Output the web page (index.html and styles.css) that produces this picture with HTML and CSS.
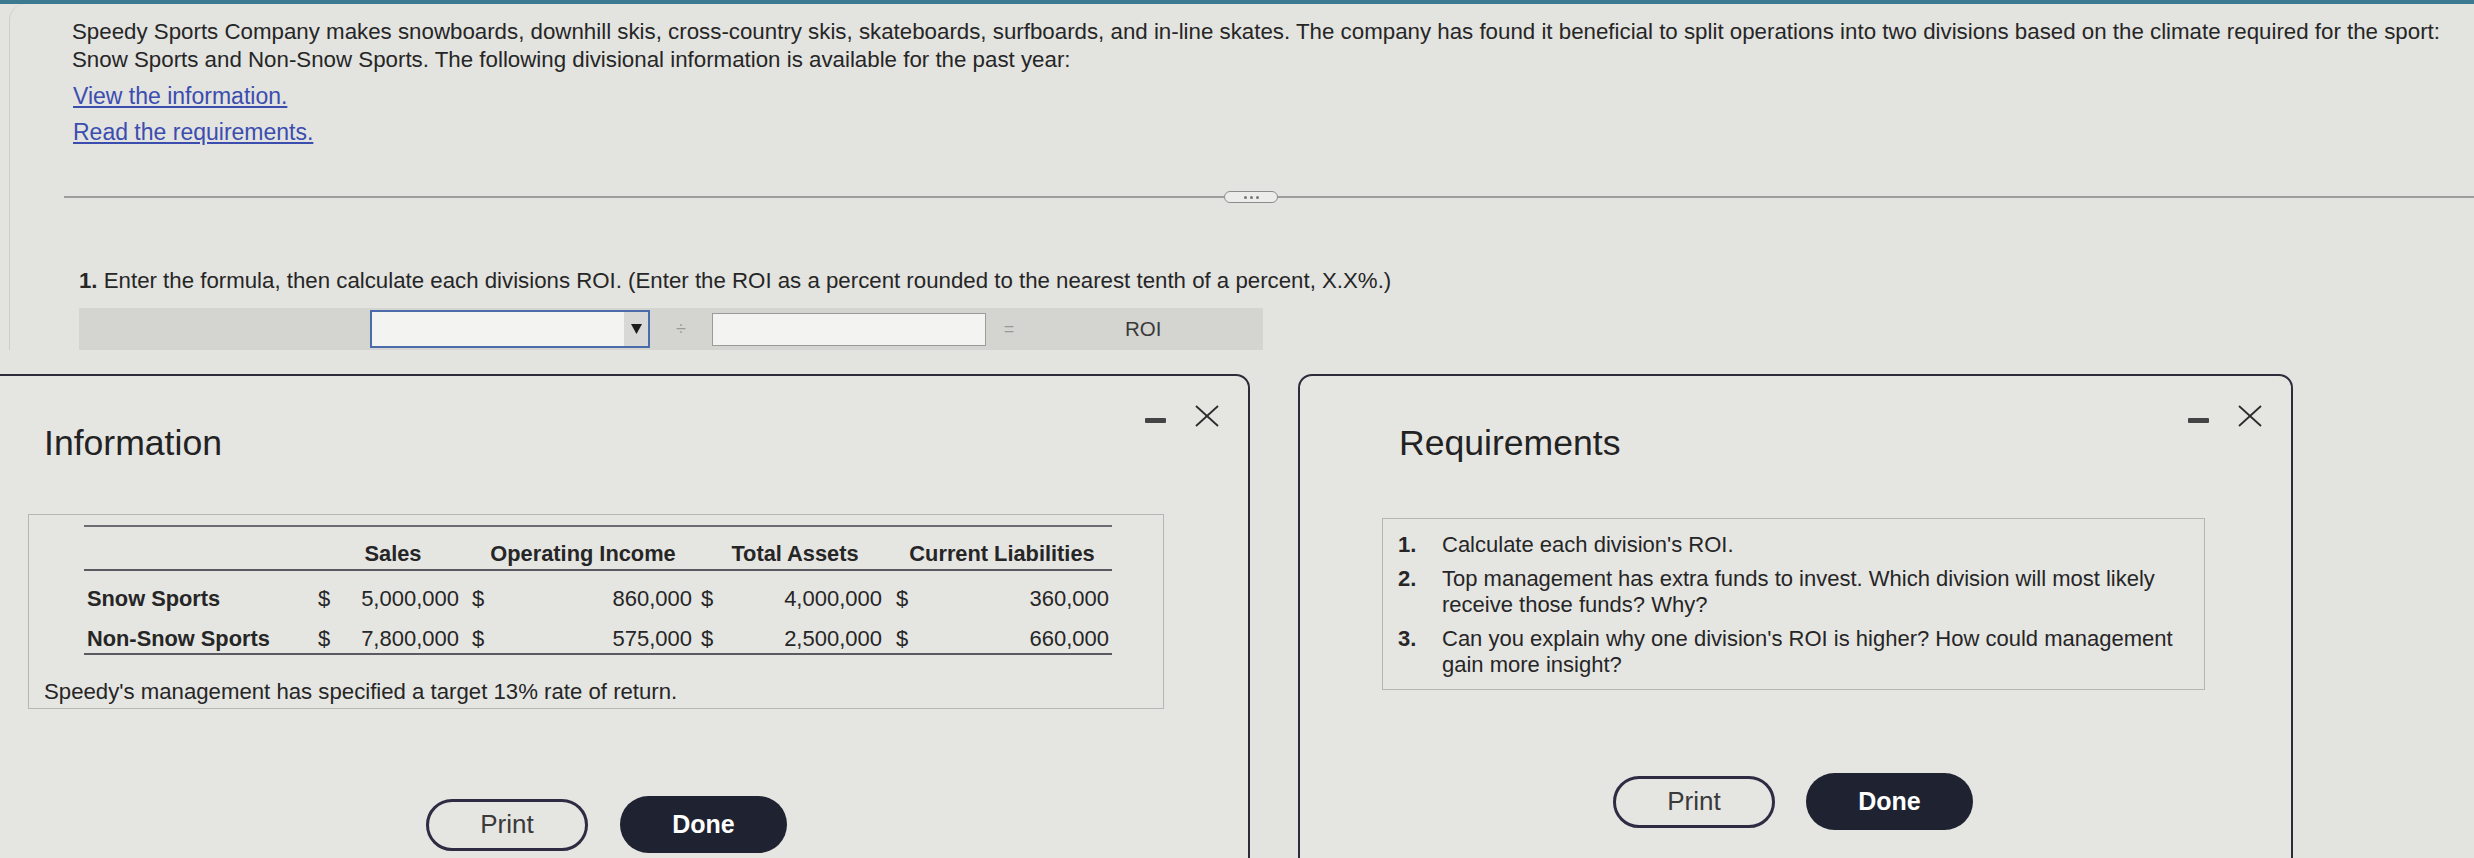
FILE: index.html
```html
<!DOCTYPE html>
<html lang="en">
<head>
<meta charset="utf-8">
<title>Speedy Sports ROI</title>
<link rel="stylesheet" href="styles.css">
</head>
<body>
<div class="topbar"></div>
<div class="sheet">
  <p class="lead">Speedy Sports Company makes snowboards, downhill skis, cross-country skis, skateboards, surfboards, and in-line skates. The company has found it beneficial to split operations into two divisions based on the climate required for the sport:<br>Snow Sports and Non-Snow Sports. The following divisional information is available for the past year:</p>
  <div class="links">
    <a class="link" href="#">View the information.</a>
    <a class="link" href="#">Read the requirements.</a>
  </div>
  <div class="divider">
    <span class="divider-line first"></span>
    <span class="pill"><i></i><i></i><i></i></span>
    <span class="divider-line rest"></span>
  </div>
  <div class="question">
    <p class="qtext"><b>1.</b> Enter the formula, then calculate each divisions ROI. (Enter the ROI as a percent rounded to the nearest tenth of a percent, X.X%.)</p>
    <div class="formula">
      <div class="select-box">
        <span class="select-arrow">
          <svg class="caret" width="11" height="10" viewBox="0 0 11 10"><polygon points="0,0 11,0 5.5,10" fill="#1c1c1c"/></svg>
        </span>
      </div>
      <span class="op op-div">÷</span>
      <div class="input-box"></div>
      <span class="op op-eq">=</span>
      <span class="roi">ROI</span>
    </div>
  </div>
</div>

<div class="panels">
  <section class="panel info">
    <div class="panel-head">
      <h2 class="panel-title">Information</h2>
      <div class="win-ctrls">
        <span class="minimize"></span>
        <svg class="close" width="26" height="22" viewBox="0 0 26 22"><line x1="2" y1="1" x2="24" y2="21" stroke="#2b2b2b" stroke-width="1.8"/><line x1="24" y1="1" x2="2" y2="21" stroke="#2b2b2b" stroke-width="1.8"/></svg>
      </div>
    </div>
    <div class="data-box">
      <div class="data-table">
        <div class="th"></div>
        <div class="th">Sales</div>
        <div class="th">Operating Income</div>
        <div class="th">Total Assets</div>
        <div class="th">Current Liabilities</div>

        <div class="td lbl r1">Snow Sports</div>
        <div class="td num c-sales r1"><span>$</span><span>5,000,000</span></div>
        <div class="td num c-oi r1"><span>$</span><span>860,000</span></div>
        <div class="td num c-ta r1"><span>$</span><span>4,000,000</span></div>
        <div class="td num c-cl r1"><span>$</span><span>360,000</span></div>

        <div class="td lbl r2">Non-Snow Sports</div>
        <div class="td num c-sales r2"><span>$</span><span>7,800,000</span></div>
        <div class="td num c-oi r2"><span>$</span><span>575,000</span></div>
        <div class="td num c-ta r2"><span>$</span><span>2,500,000</span></div>
        <div class="td num c-cl r2"><span>$</span><span>660,000</span></div>
      </div>
      <p class="note">Speedy's management has specified a target 13% rate of return.</p>
    </div>
    <div class="btns info-btns">
      <button class="btn btn-print">Print</button>
      <button class="btn btn-done">Done</button>
    </div>
  </section>

  <section class="panel req">
    <div class="panel-head">
      <h2 class="panel-title">Requirements</h2>
      <div class="win-ctrls">
        <span class="minimize"></span>
        <svg class="close" width="26" height="22" viewBox="0 0 26 22"><line x1="2" y1="1" x2="24" y2="21" stroke="#2b2b2b" stroke-width="1.8"/><line x1="24" y1="1" x2="2" y2="21" stroke="#2b2b2b" stroke-width="1.8"/></svg>
      </div>
    </div>
    <div class="req-box">
      <div class="req-item"><span class="req-num">1.</span><span class="req-text">Calculate each division's ROI.</span></div>
      <div class="req-item"><span class="req-num">2.</span><span class="req-text">Top management has extra funds to invest. Which division will most likely receive those funds? Why?</span></div>
      <div class="req-item"><span class="req-num">3.</span><span class="req-text">Can you explain why one division's ROI is higher? How could management gain more insight?</span></div>
    </div>
    <div class="btns req-btns">
      <button class="btn btn-print">Print</button>
      <button class="btn btn-done">Done</button>
    </div>
  </section>
</div>
</body>
</html>
```

FILE: styles.css
```css
html, body {
  margin: 0;
  padding: 0;
}
body {
  width: 2474px;
  height: 858px;
  overflow: hidden;
  background: #e3e3e0;
  color: #262626;
  font-family: "Liberation Sans", Arial, sans-serif;
}

.topbar {
  height: 4px;
  background: #3b7a91;
}

.sheet {
  margin-left: 9px;
  border-left: 1px solid #cdcdca;
  border-top-left-radius: 16px;
  padding-top: 14px;
}

.lead {
  margin: 0 0 0 62px;
  font-size: 22.3px;
  line-height: 28px;
  white-space: nowrap;
}

.links {
  margin: 8px 0 0 63px;
  display: flex;
  flex-direction: column;
  align-items: flex-start;
  gap: 8px;
}
.link {
  color: #3b4daf;
  font-size: 23px;
  line-height: 28px;
  text-decoration: underline;
}

.divider {
  margin: 45px 0 0 54px;
  height: 12px;
  display: flex;
  align-items: center;
}
.divider-line {
  height: 2px;
  background: #9d9d9b;
}
.divider-line.first { width: 1160px; }
.divider-line.rest { flex: 1; }
.pill {
  width: 54px;
  height: 12px;
  box-sizing: border-box;
  border: 1.5px solid #8c8c8c;
  border-radius: 6px;
  background: #ececea;
  display: flex;
  align-items: center;
  justify-content: center;
  gap: 3px;
}
.pill i {
  width: 3px;
  height: 3px;
  border-radius: 50%;
  background: #777;
}

.question {
  margin: 64px 0 0 69px;
}
.qtext {
  margin: 0;
  font-size: 22.25px;
  line-height: 28px;
}
.formula {
  margin-top: 13px;
  width: 1184px;
  height: 42px;
  box-sizing: border-box;
  padding-left: 291px;
  background: #d4d4d1;
  display: flex;
  align-items: center;
}
.select-box {
  width: 280px;
  height: 38px;
  box-sizing: border-box;
  border: 2px solid #4a6cab;
  background: #f3f3f1;
  display: flex;
  justify-content: flex-end;
}
.select-arrow {
  width: 24px;
  background: #d8d8d6;
  display: flex;
  align-items: center;
  justify-content: center;
}
.caret { display: block; }
.op {
  color: #9a9a98;
  font-size: 18px;
  text-align: center;
}
.op-div { width: 62px; }
.op-eq { width: 46px; }
.input-box {
  width: 274px;
  height: 33px;
  box-sizing: border-box;
  border: 1px solid #9b9b99;
  background: #f3f3f1;
}
.roi {
  margin-left: 93px;
  font-size: 20.5px;
  color: #3a3a3a;
}

.panels {
  display: flex;
  margin-top: 24px;
}
.panel {
  box-sizing: border-box;
  height: 520px;
  border: 2px solid #2d2c3b;
  border-radius: 14px 14px 0 0;
  background: #e5e5e2;
  padding-top: 29px;
  padding-right: 28px;
}
.panel.info {
  width: 1270px;
  margin-left: -20px;
  padding-left: 46px;
}
.panel.req {
  width: 995px;
  margin-left: 48px;
  padding-left: 82px;
}

.panel-head {
  display: flex;
  justify-content: space-between;
  align-items: flex-start;
}
.panel-title {
  margin: 19px 0 0 16px;
  font-size: 35.6px;
  line-height: 38px;
  font-weight: normal;
  color: #222;
}
.req .panel-title { margin-left: 17px; }
.win-ctrls {
  display: flex;
  align-items: flex-start;
  gap: 28px;
}
.minimize {
  margin-top: 13px;
  width: 21px;
  height: 5px;
  border-radius: 1px;
  background: #444;
}
.close { display: block; }

.data-box {
  margin-top: 52px;
  width: 1136px;
  box-sizing: border-box;
  border: 1px solid #b6b6b4;
  padding: 10px 0 3px 15px;
}
.data-table {
  margin-left: 40px;
  width: 1028px;
  display: grid;
  grid-template-columns: 234px 150px 230px 194px 220px;
  border-top: 2px solid #6c6c72;
}
.th {
  padding: 14px 0 2px;
  line-height: 26px;
  font-size: 21.8px;
  font-weight: bold;
  text-align: center;
  border-bottom: 2px solid #5a5a60;
}
.td {
  line-height: 26px;
  font-size: 22px;
}
.td.r1 { padding-top: 15px; padding-bottom: 1px; }
.td.r2 { padding-top: 13px; padding-bottom: 1px; border-bottom: 2px solid #5a5a60; }
.td.lbl {
  font-weight: bold;
  font-size: 21.8px;
  padding-left: 3px;
}
.td.num {
  display: flex;
  justify-content: space-between;
}
.c-sales { padding: 0 9px 0 0; }
.c-oi { padding: 0 6px 0 4px; }
.c-ta { padding: 0 10px 0 3px; }
.c-cl { padding: 0 3px 0 4px; }
.note {
  margin: 24px 0 0;
  font-size: 22.2px;
  line-height: 26px;
}

.btns {
  display: flex;
  align-items: center;
}
.info-btns {
  margin: 87px 0 0 398px;
  gap: 32px;
}
.req-btns {
  margin: 83px 0 0 231px;
  gap: 31px;
}
.btn {
  box-sizing: border-box;
  border-radius: 30px;
  font-family: "Liberation Sans", Arial, sans-serif;
  font-size: 26px;
  display: flex;
  align-items: center;
  justify-content: center;
  padding: 0;
}
.btn-print {
  width: 162px;
  height: 52px;
  border: 3px solid #2e2b42;
  background: transparent;
  color: #3a3a3a;
}
.btn-done {
  width: 167px;
  height: 57px;
  border: none;
  background: #1f2331;
  color: #ffffff;
  font-weight: bold;
  font-size: 25px;
}

.req-box {
  margin-top: 56px;
  width: 823px;
  box-sizing: border-box;
  border: 1px solid #b6b6b4;
  padding: 13px 17px 3px 15px;
}
.req-item {
  display: flex;
  font-size: 22px;
  line-height: 26px;
  margin-bottom: 8px;
}
.req-num {
  width: 44px;
  flex: none;
  font-weight: bold;
}
.req-text {
  width: 745px;
}
```
